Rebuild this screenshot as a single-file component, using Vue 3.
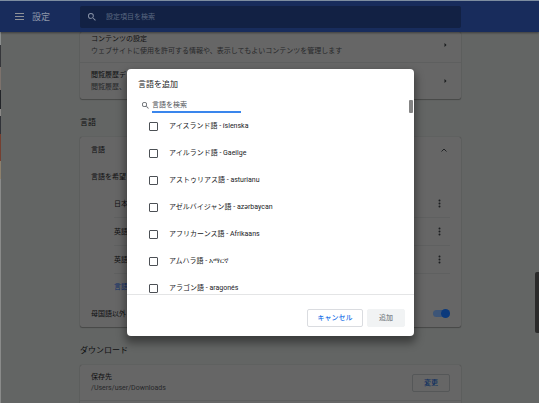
<script setup>
import { ref } from 'vue'

const languages = ref([
  'アイスランド語 - íslenska',
  'アイルランド語 - Gaeilge',
  'アストゥリアス語 - asturianu',
  'アゼルバイジャン語 - azərbaycan',
  'アフリカーンス語 - Afrikaans',
  'アムハラ語 - አማርኛ',
  'アラゴン語 - aragonés',
].map((name, i) => ({ id: 'lang-' + i, name, checked: false })))

const preferred = ['日本', '英語', '英語']
const privacy = [
  { title: 'コンテンツの設定', sub: 'ウェブサイトに使用を許可する情報や、表示してもよいコンテンツを管理します' },
  { title: '閲覧履歴デ', sub: '閲覧履歴、' },
]
const query = ref('')
const search = ref('')
const translate = ref(true)
</script>

<template>
  <div class="window">
    <header class="topbar">
      <button class="icon-btn menu" aria-label="メニュー">
        <svg viewBox="0 0 9 7" width="9" height="7"><path d="M0 .5h9M0 3.5h9M0 6.5h9" stroke="#8f9298" stroke-width="1" /></svg>
      </button>
      <h1>設定</h1>
      <label class="searchbox">
        <svg viewBox="3 3 18 18" width="8" height="8"><path fill="#8b95aa" d="M15.5 14h-.79l-.28-.27A6.47 6.47 0 0 0 16 9.5 6.5 6.5 0 1 0 9.5 16c1.61 0 3.09-.59 4.23-1.57l.27.28v.79l5 4.99L20.49 19l-4.99-5zm-6 0a4.5 4.5 0 1 1 0-9 4.5 4.5 0 0 1 0 9z" /></svg>
        <input v-model="query" type="text" placeholder="設定項目を検索" aria-label="設定項目を検索">
      </label>
    </header>

    <main class="page">
      <section class="card">
        <div v-for="item in privacy" :key="item.title" class="row link-row">
          <div>
            <div class="title">{{ item.title }}</div>
            <div class="sub">{{ item.sub }}</div>
          </div>
          <svg class="chev" viewBox="0 0 3 4" width="3" height="4"><path d="M.5 0l2 2-2 2z" fill="#16181a" /></svg>
        </div>
      </section>

      <h2>言語</h2>
      <section class="card">
        <div class="row lang-head">
          <span>言語</span>
          <svg class="chev" viewBox="0 0 6 4" width="6" height="4"><path d="M.5 3.5L3 1l2.5 2.5" fill="none" stroke="#202224" stroke-width="1" /></svg>
        </div>
        <div class="row order">言語を希望</div>
        <ul class="preferred">
          <li v-for="(name, i) in preferred" :key="i">
            <span>{{ name }}</span>
            <button class="icon-btn" aria-label="その他の操作">
              <svg viewBox="0 0 3 9" width="3" height="9"><g fill="#1c1e20"><circle cx="1.5" cy="1.5" r="1" /><circle cx="1.5" cy="4.5" r="1" /><circle cx="1.5" cy="7.5" r="1" /></g></svg>
            </button>
          </li>
          <li class="add"><a href="#add">言語</a></li>
        </ul>
        <label class="row translate">
          <span>母国語以外</span>
          <input v-model="translate" type="checkbox" class="toggle">
        </label>
      </section>

      <h2>ダウンロード</h2>
      <section class="card">
        <div class="row save-row">
          <div>
            <div class="title">保存先</div>
            <div class="sub">/Users/user/Downloads</div>
          </div>
          <button class="change">変更</button>
        </div>
        <div class="row next"></div>
      </section>
    </main>

    <div class="edge"></div>
    <div class="page-scroll"></div>

    <div class="overlay">
      <div class="dialog" role="dialog" aria-labelledby="dialog-title">
        <h3 id="dialog-title">言語を追加</h3>
        <label class="lang-search">
          <svg viewBox="3 3 18 18" width="7" height="7"><path fill="#5f6368" d="M15.5 14h-.79l-.28-.27A6.47 6.47 0 0 0 16 9.5 6.5 6.5 0 1 0 9.5 16c1.61 0 3.09-.59 4.23-1.57l.27.28v.79l5 4.99L20.49 19l-4.99-5zm-6 0a4.5 4.5 0 1 1 0-9 4.5 4.5 0 0 1 0 9z" /></svg>
          <input v-model="search" type="text" placeholder="言語を検索" aria-label="言語を検索">
        </label>
        <div class="list">
          <label v-for="l in languages" :key="l.id" :for="l.id">
            <input :id="l.id" v-model="l.checked" type="checkbox">
            <span>{{ l.name }}</span>
          </label>
        </div>
        <footer>
          <button class="cancel">キャンセル</button>
          <button class="confirm" disabled>追加</button>
        </footer>
        <div class="dialog-scroll"></div>
      </div>
    </div>
  </div>
</template>

<style>
body {
  background: #636564;
  overflow: hidden;
}
</style>

<style scoped>
* {
  box-sizing: border-box;
}
.window {
  position: relative;
  height: 100vh;
  overflow: hidden;
  display: flex;
  flex-direction: column;
  border-top: 1px solid #7d8da0;
  background: #636564;
  color: #0e0f10;
  font-family: Roboto, "Noto Sans CJK JP", sans-serif;
  font-size: 7px;
  line-height: 10px;
}
button,
input {
  font: inherit;
  margin: 0;
  padding: 0;
}
h1, h2, h3, ul {
  margin: 0;
  padding: 0;
  font-weight: 400;
}
.topbar {
  flex: none;
  display: flex;
  align-items: center;
  height: 31px;
  padding-left: 15px;
  background: #182c5c;
  box-shadow: 0 1px 2px rgba(0, 0, 0, 0.4);
  z-index: 1;
}
.icon-btn {
  display: flex;
  border: 0;
  background: none;
}
h1 {
  width: 48px;
  margin-left: 8px;
  font-size: 9px;
  color: #8d96a8;
}
.searchbox {
  flex: 0 1 381px;
  display: flex;
  align-items: center;
  gap: 10px;
  height: 22px;
  padding: 0 8px;
  border-radius: 2px;
  background: #122144;
}
.searchbox input {
  flex: 1;
  border: 0;
  outline: 0;
  background: none;
}
.searchbox input::placeholder {
  color: #5a6780;
  opacity: 1;
}
.page {
  flex: none;
  max-width: 461px;
  padding-left: 80px;
}
.card {
  border-radius: 2px;
  background: #666;
  box-shadow: 0 0 1px rgba(0, 0, 0, 0.4), 0 1px 1px rgba(0, 0, 0, 0.25);
}
.row {
  display: flex;
  align-items: center;
  justify-content: space-between;
  padding: 0 11px;
}
.sub {
  color: #26282a;
}
.title, .sub {
  line-height: 11px;
}
.link-row {
  height: 36px;
}
.link-row .title, .link-row .sub {
  line-height: 12px;
}
.link-row:first-child {
  height: 31px;
  padding-bottom: 4px;
  border-bottom: 1px solid #5e5f5f;
}
.chev {
  margin-right: 3px;
}
h2 {
  padding: 18px 0 9px;
  font-size: 8px;
  line-height: 11px;
}
.lang-head {
  height: 26px;
}
.order {
  height: 27px;
}
.preferred {
  padding: 0 11px 0 34px;
  list-style: none;
}
.preferred li {
  display: flex;
  align-items: center;
  justify-content: space-between;
  height: 28px;
  padding-right: 9px;
  border-bottom: 1px solid #5f6060;
}
.preferred li.add {
  height: 26px;
  border: 0;
}
.preferred a {
  color: #10306a;
  text-decoration: none;
}
.translate {
  height: 27px;
}
.toggle {
  appearance: none;
  display: flex;
  align-items: center;
  justify-content: flex-end;
  width: 17px;
  height: 7px;
  border-radius: 4px;
  background: #3d5577;
}
.toggle::after {
  content: "";
  width: 9px;
  height: 9px;
  flex: none;
  border-radius: 50%;
  background: #0c3a7c;
}
.save-row {
  height: 36px;
  border-bottom: 1px solid #5e5f5f;
}
.change {
  width: 38px;
  height: 18px;
  border: 1px solid #555758;
  border-radius: 2px;
  background: none;
  color: #0a2e60;
  font-weight: 500;
}
.next {
  height: 30px;
}
.edge {
  position: absolute;
  left: 0;
  top: 0;
  bottom: 0;
  width: 1px;
  background: linear-gradient(#7d8da0 0 30px, #8a8d8c 30px 44px, #35363a 44px 66px, #7d726c 66px 89px, #222428 89px 108px, #8a8886 108px 115px, #303238 115px 133px, #753f30 133px 160px, #8d806c 160px 178px, #8a8b8a 178px);
}
.page-scroll {
  position: absolute;
  right: 0;
  top: 271px;
  width: 4px;
  height: 61px;
  border-radius: 2px 0 0 2px;
  background: #2b2b2b;
}
.overlay {
  position: absolute;
  inset: 0;
  z-index: 2;
  display: flex;
  align-items: center;
  justify-content: center;
}
.dialog {
  position: relative;
  width: 287px;
  margin-left: 2px;
  border-radius: 4px;
  background: #fff;
  color: #202124;
  box-shadow: 0 5px 9px 2px rgba(0, 0, 0, 0.4);
}
h3 {
  padding: 10px 11px 9px;
  font-size: 8px;
  line-height: 11px;
}
.lang-search {
  display: flex;
  align-items: center;
  gap: 3px;
  width: 114px;
  padding-left: 15px;
}
.lang-search input {
  flex: 1;
  min-width: 0;
  height: 14px;
  border: 0;
  border-bottom: 2px solid #3a86ec;
  outline: 0;
}
.lang-search input::placeholder {
  color: #4f5358;
  opacity: 1;
}
.list {
  height: 182px;
  overflow: hidden;
  border-bottom: 1px solid #e4e5e6;
}
.list label {
  display: flex;
  align-items: center;
  gap: 11px;
  height: 27px;
  padding-left: 22px;
}
.list input {
  appearance: none;
  width: 9px;
  height: 9px;
  border: 1px solid #4c5055;
  border-radius: 1px;
}
footer {
  display: flex;
  justify-content: flex-end;
  gap: 4px;
  padding: 14px 9px 9px;
}
footer button {
  height: 18px;
  border: 1px solid #dadce0;
  border-radius: 2px;
  background: #fff;
  color: #1a73e8;
  font-weight: 500;
}
footer .cancel {
  width: 56px;
}
footer .confirm {
  width: 38px;
  border-color: #f1f3f4;
  background: #f1f3f4;
  color: #80868b;
}
.dialog-scroll {
  position: absolute;
  right: 1px;
  top: 31px;
  width: 4px;
  height: 13px;
  border-radius: 1px;
  background: #848484;
}
</style>
